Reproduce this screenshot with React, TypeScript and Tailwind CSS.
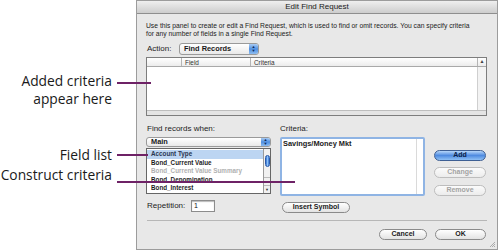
import React from 'react';

const purple = 'bg-[#6e2266]';

function PopupButton({ label, className }: { label: string; className: string }) {
  return (
    <div
      className={`flex items-stretch rounded-[3px] border border-[#9a9a9a] bg-gradient-to-b from-white to-[#e9e9e9] overflow-hidden ${className}`}
    >
      <span className="flex-1 flex items-center pl-[4px] text-[7.4px] font-bold text-[#1a1a1a]">{label}</span>
      <span className="w-[9px] flex flex-col items-center justify-center bg-gradient-to-b from-[#a9ccf3] via-[#4f8fe0] to-[#8dbcf0] text-[#0d2a5c]">
        <span className="text-[4px] leading-[4px]">▲</span>
        <span className="text-[4px] leading-[4px]">▼</span>
      </span>
    </div>
  );
}

function PillButton({
  label,
  className,
  kind = 'normal'
}: {
  label: string;
  className: string;
  kind?: 'normal' | 'default' | 'disabled';
}) {
  const look =
    kind === 'default'
      ? 'border-[#3e5f93] bg-gradient-to-b from-[#b7d6f8] via-[#4f8be0] to-[#8fc0f4] text-[#0c1f47]'
      : kind === 'disabled'
        ? 'border-[#bdbdbd] bg-gradient-to-b from-[#fbfbfb] to-[#ececec] text-[#a3a3a3]'
        : 'border-[#8a8a8a] bg-gradient-to-b from-white to-[#e3e3e3] text-[#1b1b1b]';
  return (
    <div className={`flex items-center justify-center rounded-full border text-[7px] font-bold ${look} ${className}`}>
      {label}
    </div>
  );
}

const fields = [
  { name: 'Account Type', selected: true },
  { name: 'Bond_Current Value' },
  { name: 'Bond_Current Value Summary', dim: true },
  { name: 'Bond_Denomination' },
  { name: 'Bond_Interest' }
];

function FindRequestDialog() {
  return (
    <div className="w-[362px] h-[250px] shrink-0 border border-[#9c9c9c] bg-[#e8e8e8] flex flex-col relative">
      <div className="h-[13px] shrink-0 bg-gradient-to-b from-[#efefef] to-[#cdcdcd] border-b border-[#8e8e8e] flex items-center justify-center text-[8px] text-[#202020]">
        Edit Find Request
      </div>

      <div className="flex flex-col pl-[9px] pr-[10px] pt-[8px]">
        <p className="text-[6.75px] leading-[8px] text-[#222]">
          Use this panel to create or edit a Find Request, which is used to find or omit records. You can specify criteria
          <br />
          for any number of fields in a single Find Request.
        </p>

        <div className="mt-[5px] h-[12px] flex items-center">
          <span className="w-[33px] pl-[1px] text-[8px] text-[#1c1c1c]">Action:</span>
          <PopupButton label="Find Records" className="w-[80px] h-[12px]" />
        </div>

        <div className="mt-[2px] h-[59px] border border-[#7d7d7d] bg-white flex flex-col">
          <div className="h-[9px] flex border-b border-[#a9a9a9] bg-gradient-to-b from-white to-[#ececec] text-[6.4px] text-[#333]">
            <div className="w-[35px] border-r border-[#b5b5b5]" />
            <div className="w-[69px] border-r border-[#b5b5b5] pl-[3px] leading-[9px]">Field</div>
            <div className="flex-1 pl-[3px] leading-[9px]">Criteria</div>
            <div className="w-[9px] border-l border-[#b5b5b5] flex items-center justify-center text-[5px] text-[#444]">▲</div>
          </div>
          <div className="flex-1 flex">
            <div className="flex-1" />
            <div className="w-[9px] border-l border-[#cfcfcf] bg-[#f3f3f3]" />
          </div>
          <div className="h-[5px] border-t border-[#bdbdbd] bg-[#e4e4e4]" />
        </div>

        <div className="mt-[7px] h-[11px] flex items-center text-[8px] text-[#1c1c1c]">
          <span className="w-[134px] pl-[1px]">Find records when:</span>
          <span>Criteria:</span>
        </div>

        <div className="mt-[3px] flex">
          <div className="w-[125px] flex flex-col">
            <PopupButton label="Main" className="w-[125px] h-[10px]" />
            <div className="mt-[1px] h-[46px] border border-[#666] bg-white flex">
              <div className="flex-1 flex flex-col pt-[1px]">
                {fields.map((f) => (
                  <div
                    key={f.name}
                    className={`h-[8.6px] pl-[4px] text-[6.3px] leading-[8.6px] font-bold ${
                      f.selected ? 'bg-[#bcd5f2] text-[#2a3550]' : f.dim ? 'text-[#b0b0b0]' : 'text-[#1d1d1d]'
                    }`}
                  >
                    {f.name}
                  </div>
                ))}
              </div>
              <div className="w-[7px] border-l border-[#9a9a9a] bg-[#f1f1f1] flex flex-col">
                <div className="mt-[6px] mx-auto w-[5px] h-[12px] rounded-full bg-gradient-to-r from-[#2f6fd0] via-[#8ec0f5] to-[#2f6fd0] border border-[#2a5aa8]" />
                <div className="flex-1" />
                <div className="h-[8px] border-t border-[#bbb] flex items-center justify-center text-[4px] text-[#333]">▲</div>
                <div className="h-[8px] border-t border-[#bbb] flex items-center justify-center text-[4px] text-[#333]">▼</div>
              </div>
            </div>
            <div className="mt-[6px] h-[12px] flex items-center">
              <span className="w-[45px] pl-[1px] text-[8px] text-[#1c1c1c]">Repetition:</span>
              <div className="w-[24px] h-[12px] border border-[#8c8c8c] bg-white shadow-[inset_0_1px_1px_#bbb] pl-[2px] text-[7px] leading-[10px] text-[#111]">
                1
              </div>
            </div>
          </div>

          <div className="ml-[9px] w-[145px] flex flex-col">
            <div className="h-[59px] rounded-[2px] border-2 border-[#8fb4e4] bg-white flex">
              <div className="flex-1 pl-[1px] text-[7.4px] font-bold leading-[10px] text-[#1a1a1a]">Savings/Money Mkt</div>
              <div className="w-[7px] border-l border-[#dadada]" />
            </div>
            <PillButton label="Insert Symbol" className="mt-[6px] ml-[2px] w-[68px] h-[11px]" />
          </div>

          <div className="ml-[9px] w-[52px] flex flex-col">
            <PillButton label="Add" kind="default" className="mt-[13px] h-[11px]" />
            <PillButton label="Change" kind="disabled" className="mt-[6px] h-[11px]" />
            <PillButton label="Remove" kind="disabled" className="mt-[7px] h-[11px]" />
          </div>
        </div>

        <div className="mt-[7px] ml-[1px] h-px bg-[#b7b7b7]" />

        <div className="mt-[8px] flex justify-end gap-[8px] pr-[1px]">
          <PillButton label="Cancel" className="w-[48px] h-[11px]" />
          <PillButton label="OK" className="w-[51px] h-[11px]" />
        </div>
      </div>

      <svg className="absolute right-[1px] bottom-[1px]" width="8" height="8" viewBox="0 0 8 8">
        <path d="M7 2 L2 7 M7 4 L4 7 M7 6 L6 7" stroke="#9a9a9a" strokeWidth="0.8" />
      </svg>
    </div>
  );
}

function Callouts() {
  return (
    <div className="absolute inset-0 pointer-events-none font-['Open_Sans',sans-serif] text-[13.8px] text-[#1a1a1a]">
      <div className="absolute right-[388px] top-[72px] text-right leading-[18px]">
        Added criteria
        <br />
        appear here
      </div>
      <div className={`absolute left-[117px] top-[82px] w-[34px] h-[2px] ${purple}`} />

      <div className="absolute right-[388px] top-[146px] leading-[18px]">Field list</div>
      <div className={`absolute left-[117px] top-[154px] w-[31px] h-[2px] ${purple}`} />

      <div className="absolute right-[388px] top-[166px] leading-[18px]">Construct criteria</div>
      <div className={`absolute left-[117px] top-[181px] w-[178px] h-[2px] ${purple}`} />
    </div>
  );
}

export default function App() {
  return (
    <div className="relative w-[500px] h-[252px] bg-white overflow-hidden flex font-['Liberation_Sans',Arial,sans-serif]">
      <div className="w-[136px] shrink-0" />
      <FindRequestDialog />
      <Callouts />
    </div>
  );
}
